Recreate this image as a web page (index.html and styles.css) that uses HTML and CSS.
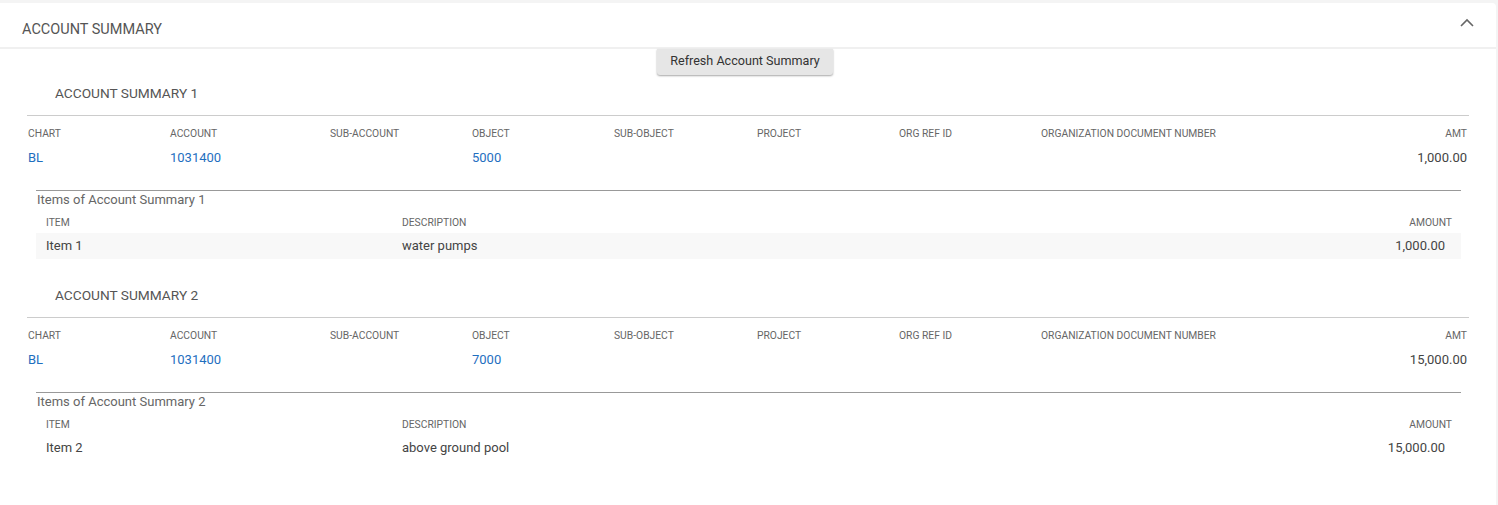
FILE: index.html
```
<!DOCTYPE html>
<html lang="en">
  <head>
    <meta charset="UTF-8" />
    <title>Account Summary</title>
    <link rel="stylesheet" href="styles.css">
  </head>
  <body>
    <div class="panel">
      <div class="panel-header">
        <span class="panel-title">ACCOUNT SUMMARY</span>
        <svg class="chevron" width="14" height="9" viewBox="0 0 14 9">
          <polyline points="1,8 7,2 13,8" fill="none" stroke="#666" stroke-width="1.6" />
        </svg>
      </div>

      <div class="panel-body">
        <div class="refresh-row">
          <button class="refresh">Refresh Account Summary</button>
        </div>

        <div class="summary">
          <div class="summary-title">ACCOUNT SUMMARY 1</div>
          <div class="acct-grid acct-head">
            <span>CHART</span>
            <span>ACCOUNT</span>
            <span>SUB-ACCOUNT</span>
            <span>OBJECT</span>
            <span>SUB-OBJECT</span>
            <span>PROJECT</span>
            <span>ORG REF ID</span>
            <span>ORGANIZATION DOCUMENT NUMBER</span>
            <span class="right">AMT</span>
          </div>
          <div class="acct-grid acct-row">
            <a>BL</a>
            <a>1031400</a>
            <span></span>
            <a>5000</a>
            <span></span>
            <span></span>
            <span></span>
            <span></span>
            <span class="right">1,000.00</span>
          </div>

          <div class="items">
            <div class="items-title">Items of Account Summary 1</div>
            <div class="item-grid item-head">
              <span>ITEM</span>
              <span>DESCRIPTION</span>
              <span class="right">AMOUNT</span>
            </div>
            <div class="item-grid item-row striped">
              <span>Item 1</span>
              <span>water pumps</span>
              <span class="right">1,000.00</span>
            </div>
          </div>
        </div>

        <div class="summary">
          <div class="summary-title">ACCOUNT SUMMARY 2</div>
          <div class="acct-grid acct-head">
            <span>CHART</span>
            <span>ACCOUNT</span>
            <span>SUB-ACCOUNT</span>
            <span>OBJECT</span>
            <span>SUB-OBJECT</span>
            <span>PROJECT</span>
            <span>ORG REF ID</span>
            <span>ORGANIZATION DOCUMENT NUMBER</span>
            <span class="right">AMT</span>
          </div>
          <div class="acct-grid acct-row">
            <a>BL</a>
            <a>1031400</a>
            <span></span>
            <a>7000</a>
            <span></span>
            <span></span>
            <span></span>
            <span></span>
            <span class="right">15,000.00</span>
          </div>

          <div class="items">
            <div class="items-title">Items of Account Summary 2</div>
            <div class="item-grid item-head">
              <span>ITEM</span>
              <span>DESCRIPTION</span>
              <span class="right">AMOUNT</span>
            </div>
            <div class="item-grid item-row">
              <span>Item 2</span>
              <span>above ground pool</span>
              <span class="right">15,000.00</span>
            </div>
          </div>
        </div>
      </div>
    </div>
  </body>
</html>
```

FILE: styles.css
```
* {
  margin: 0;
  padding: 0;
  box-sizing: border-box;
}

body {
  background-color: #f4f4f4;
  font-family: Roboto, "Liberation Sans", Arial, sans-serif;
  color: #444;
  padding: 3px 2px 0 0;
  height: 505px;
  overflow: hidden;
}

.panel {
  background-color: #ffffff;
  border-radius: 0 4px 0 0;
  height: 502px;
}

.panel-header {
  height: 46px;
  display: flex;
  align-items: center;
  justify-content: space-between;
  padding: 0 22px 0 22px;
  border-bottom: 2px solid #f0f0f0;
}

.panel-title {
  font-size: 14.5px;
  color: #555;
  padding-top: 9px;
}

.chevron {
  margin-top: -5px;
}

.panel-body {
  padding: 0 27px;
}

.refresh-row {
  display: flex;
  justify-content: center;
  padding-right: 6px;
}

.refresh {
  width: 176px;
  height: 26px;
  padding-bottom: 4px;
  background-color: #e6e6e6;
  border: none;
  border-radius: 0 0 3px 3px;
  box-shadow: 0 1px 2px rgba(0, 0, 0, 0.35);
  font-family: inherit;
  font-size: 12.6px;
  color: #333;
}

.summary-title {
  font-size: 13.7px;
  line-height: 20px;
  color: #555;
  padding: 8px 0 12px 28px;
  border-bottom: 1px solid #cccccc;
}

.summary + .summary .summary-title {
  margin-top: 18px;
}

.acct-grid {
  display: grid;
  grid-template-columns: 142px 160px 142px 142px 143px 142px 142px 1fr 80px;
  padding: 0 2px 0 1px;
}

.acct-head {
  font-size: 10.3px;
  line-height: 12px;
  color: #666;
  padding-top: 12px;
}

.acct-row {
  font-size: 13px;
  line-height: 24px;
  padding-top: 6px;
}

.acct-row a {
  color: #1f6fbf;
  text-decoration: none;
}

.right {
  text-align: right;
}

.items {
  margin: 20px 8px 0 9px;
  border-top: 1px solid #999999;
}

.items-title {
  font-size: 13px;
  line-height: 16px;
  color: #666;
  padding: 1px 0 0 1px;
}

.item-grid {
  display: grid;
  grid-template-columns: 356px 1fr 120px;
  padding: 0 16px 0 10px;
}

.item-head {
  font-size: 10.3px;
  line-height: 12px;
  color: #666;
  padding: 9px 9px 4px 10px;
}

.item-row {
  font-size: 13px;
  line-height: 26px;
}

.striped {
  background-color: #f8f8f8;
}
```
